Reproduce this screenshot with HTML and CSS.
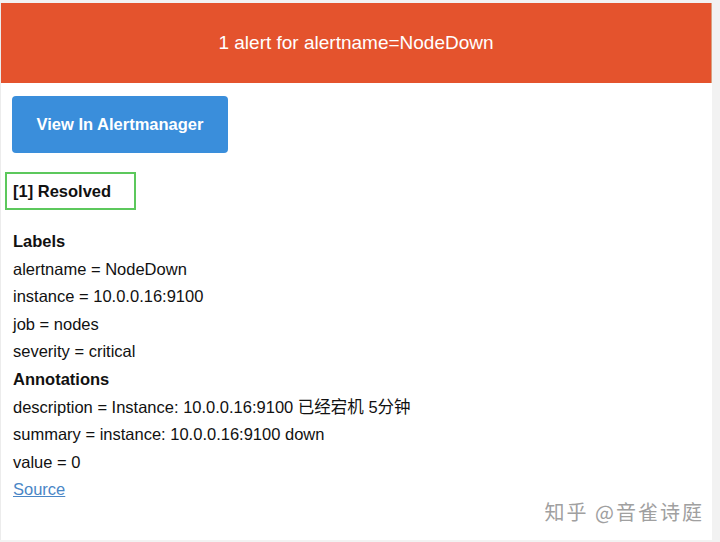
FILE: index.html
```html
<!DOCTYPE html>
<html>
<head>
<meta charset="utf-8">
<link rel="stylesheet" href="styles.css">
</head>
<body>
<div class="card">
  <div class="header">1 alert for alertname=NodeDown</div>
  <div class="content">
    <a class="button" href="#">View In Alertmanager</a>
    <div class="status">[1] Resolved</div>
    <div class="details">
      <div class="line heading">Labels</div>
      <div class="line">alertname = NodeDown</div>
      <div class="line">instance = 10.0.0.16:9100</div>
      <div class="line">job = nodes</div>
      <div class="line">severity = critical</div>
      <div class="line heading">Annotations</div>
      <div class="line">description = Instance: 10.0.0.16:9100 已经宕机 5分钟</div>
      <div class="line">summary = instance: 10.0.0.16:9100 down</div>
      <div class="line">value = 0</div>
      <div class="line"><a class="link" href="#">Source</a></div>
    </div>
  </div>
  <div class="watermark">知乎 @音雀诗庭</div>
</div>
</body>
</html>
```
FILE: styles.css
```css
html, body {
  margin: 0;
  padding: 0;
}
body {
  background: #f2f2f2;
  width: 720px;
  height: 542px;
  overflow: hidden;
  font-family: "Liberation Sans", Arial, "Noto Sans CJK SC", sans-serif;
  color: #111;
}
.card {
  position: relative;
  box-sizing: border-box;
  margin: 3px 0 0 0;
  width: 712px;
  height: 537px;
  background: #ffffff;
  border-left: 1px solid #ececec;
}
.header {
  height: 80px;
  background: #e4532d;
  color: #ffffff;
  font-size: 19px;
  display: flex;
  align-items: center;
  justify-content: center;
  border-right: 1px solid #d9a080;
}
.content {
  padding: 13px 0 0 11px;
  display: flex;
  flex-direction: column;
  align-items: flex-start;
}
.button {
  box-sizing: border-box;
  width: 216px;
  height: 57px;
  background: #3a8edb;
  border-radius: 4px;
  color: #ffffff;
  font-weight: bold;
  font-size: 16.5px;
  text-decoration: none;
  display: flex;
  align-items: center;
  justify-content: center;
}
.status {
  box-sizing: border-box;
  margin: 19px 0 0 -7px;
  width: 131px;
  height: 38px;
  border: 2px solid #5cc85c;
  padding-left: 6px;
  display: flex;
  align-items: center;
  font-weight: bold;
  font-size: 16.5px;
}
.details {
  margin-top: 18px;
  padding-left: 1px;
  font-size: 16.5px;
  line-height: 27.6px;
}
.heading {
  font-weight: bold;
}
.line {
  white-space: nowrap;
}
.link {
  color: #4a86c6;
  text-decoration: underline;
}
.watermark {
  position: absolute;
  right: 8px;
  bottom: 14px;
  font-size: 20px;
  color: #a0a0a0;
  letter-spacing: 2px;
  font-family: "Noto Sans CJK SC", sans-serif;
  text-shadow: 0 0 1px #ffffff;
}
```
